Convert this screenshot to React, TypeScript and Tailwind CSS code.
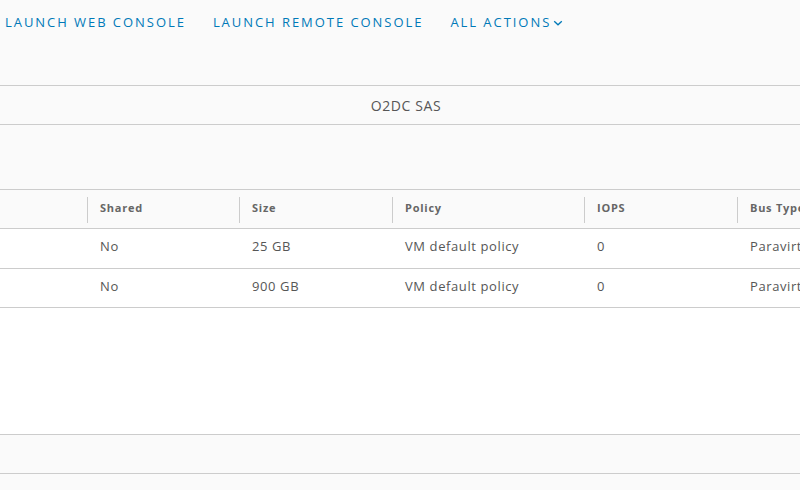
import React from "react";

const cols = [
  { label: "", w: "w-[87px]" },
  { label: "Shared", w: "w-[152px]" },
  { label: "Size", w: "w-[153px]" },
  { label: "Policy", w: "w-[192px]" },
  { label: "IOPS", w: "w-[153px]" },
  { label: "Bus Type", w: "w-[200px]" },
];

const rows = [
  ["", "No", "25 GB", "VM default policy", "0", "Paravirtual"],
  ["", "No", "900 GB", "VM default policy", "0", "Paravirtual"],
];

export default function App() {
  return (
    <div className="w-[800px] h-[490px] overflow-hidden bg-[#fafafa] flex flex-col" style={{ fontFamily: '"Open Sans", "Liberation Sans", sans-serif' }}>
      <div className="h-[86px] border-b border-[#cccccc] shrink-0">
        <div className="flex items-center h-[45px] pl-[5px] text-[13px] font-medium tracking-[1.95px] text-[#0079b8]">
          <span>LAUNCH WEB CONSOLE</span>
          <span className="ml-[27px]">LAUNCH REMOTE CONSOLE</span>
          <span className="ml-[27px] flex items-center">
            ALL ACTIONS
            <svg width="10" height="6" viewBox="0 0 10 6" className="ml-[2px] mt-[1px]">
              <path d="M1.2 1.2 L5 4.8 L8.8 1.2" fill="none" stroke="#0079b8" strokeWidth="1.3" />
            </svg>
          </span>
        </div>
      </div>
      <div className="h-[39px] border-b border-[#cccccc] shrink-0 flex items-center justify-center pl-[12px] text-[14px] tracking-[0.6px] text-[#565656]">
        O2DC SAS
      </div>
      <div className="h-[64px] shrink-0" />
      <div className="border-t border-[#cccccc] shrink-0 overflow-hidden">
        <div className="flex h-[39px] border-b border-[#cccccc] bg-[#fafafa] whitespace-nowrap">
          {cols.map((c, i) => (
            <div key={i} className={`${c.w} shrink-0 flex items-center pb-[2px] relative`}>
              {i > 0 && <div className="absolute left-0 top-[7px] h-[26px] w-px bg-[#cccccc]" />}
              <span className="pl-[13px] text-[11px] font-bold tracking-[0.75px] text-[#666666]">{c.label}</span>
            </div>
          ))}
        </div>
        {rows.map((r, ri) => (
          <div key={ri} className={`flex ${ri === 0 ? "h-[40px]" : "h-[39px]"} border-b border-[#cccccc] bg-white whitespace-nowrap`}>
            {r.map((v, i) => (
              <div key={i} className={`${cols[i].w} shrink-0 flex items-center pb-[3px]`}>
                <span className="pl-[13px] text-[13px] tracking-[0.6px] text-[#565656]">{v}</span>
              </div>
            ))}
          </div>
        ))}
      </div>
      <div className="h-[126px] bg-white shrink-0" />
      <div className="h-[40px] border-t border-b border-[#cccccc] shrink-0" />
      <div className="flex-1" />
    </div>
  );
}
